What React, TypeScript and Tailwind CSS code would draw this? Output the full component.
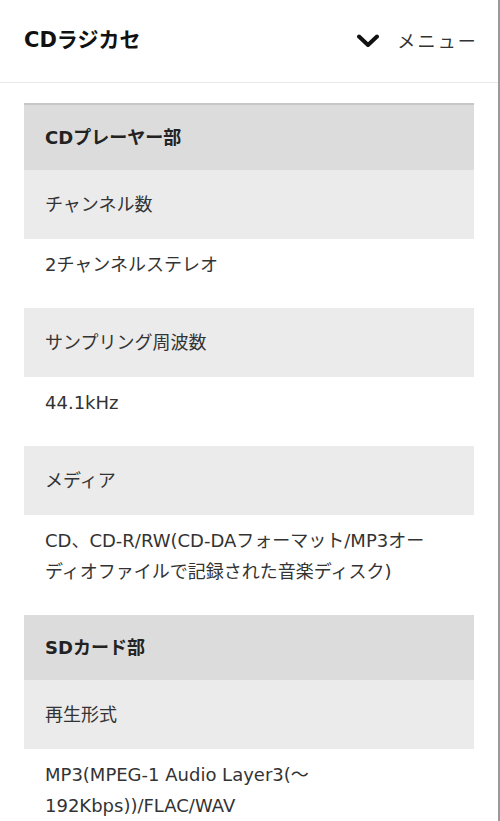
import React from 'react';

type Row = { kind: 'section' | 'label' | 'value'; text: React.ReactNode };

const rows: Row[] = [
  { kind: 'section', text: 'CDプレーヤー部' },
  { kind: 'label', text: 'チャンネル数' },
  { kind: 'value', text: '2チャンネルステレオ' },
  { kind: 'label', text: 'サンプリング周波数' },
  { kind: 'value', text: '44.1kHz' },
  { kind: 'label', text: 'メディア' },
  { kind: 'value', text: 'CD、CD-R/RW(CD-DAフォーマット/MP3オーディオファイルで記録された音楽ディスク)' },
  { kind: 'section', text: 'SDカード部' },
  { kind: 'label', text: '再生形式' },
  { kind: 'value', text: 'MP3(MPEG-1 Audio Layer3(～192Kbps))/FLAC/WAV' },
];

const font = { fontFamily: '"DejaVu Sans", "Noto Sans CJK JP", sans-serif' };

export default function App() {
  return (
    <div
      className="w-[500px] h-[821px] overflow-hidden bg-white border-r-2 border-[#9a9a9a] text-[#333]"
      style={font}
    >
      <header className="h-[83px] flex items-center justify-between pl-6 pr-[20px] border-b border-[#e8e8e8]">
        <h1 className="text-[21px] font-bold text-[#111]">CDラジカセ</h1>
        <button className="flex items-center gap-[18px] text-[18px] text-[#333]">
          <svg width="22" height="14" viewBox="0 0 22 14" fill="none">
            <path d="M2 2.5 L11 11 L20 2.5" stroke="#111" strokeWidth="4" strokeLinecap="round" strokeLinejoin="round" />
          </svg>
          <span className="tracking-[0.12em]">メニュー</span>
        </button>
      </header>

      <div className="mx-6 mt-[20px] border-t-2 border-[#c6c6c6]">
        {rows.map((r, i) => {
          if (r.kind === 'section') {
            return (
              <div key={i} className="bg-[#dcdcdc] px-[21px] py-[17px] text-[18px] leading-[31px] font-bold text-[#222]">
                {r.text}
              </div>
            );
          }
          if (r.kind === 'label') {
            return (
              <div key={i} className="bg-[#ebebeb] px-[21px] py-[19px] text-[18px] leading-[31px] text-[#333]">
                {r.text}
              </div>
            );
          }
          return (
            <div key={i} className="bg-white pl-[21px] pr-[40px] pt-[10px] pb-[28px] text-[18px] leading-[31px] text-[#333]">
              {r.text}
            </div>
          );
        })}
      </div>
    </div>
  );
}
